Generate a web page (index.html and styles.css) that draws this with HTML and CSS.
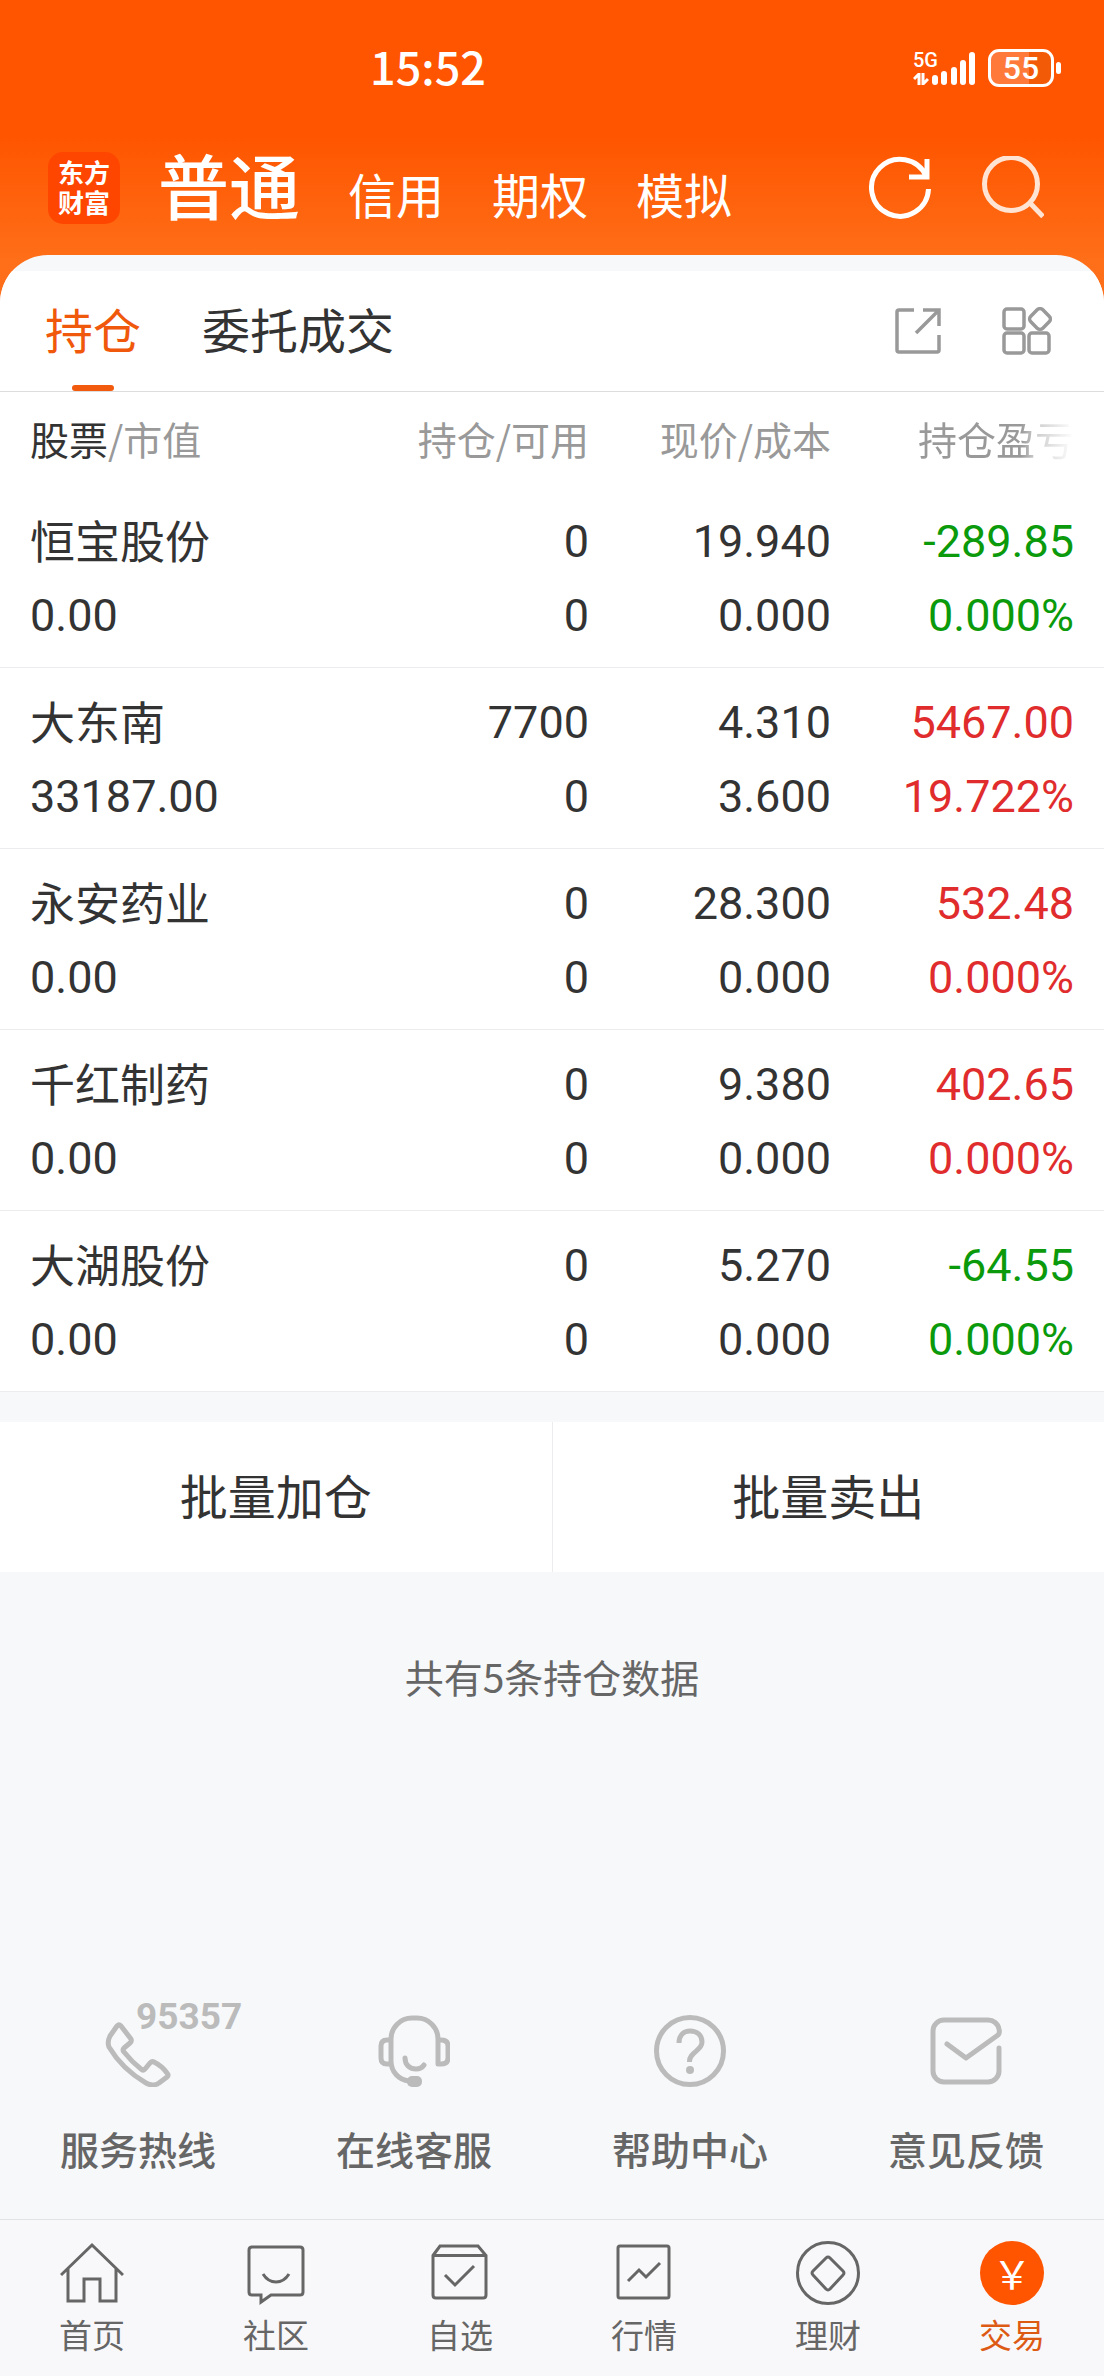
FILE: index.html
```html
<!DOCTYPE html>
<html lang="zh-CN">
<head>
<meta charset="utf-8">
<meta name="viewport" content="width=device-width">
<title>东方财富 - 交易</title>
<link rel="stylesheet" href="styles.css">
</head>
<body>
<header class="header">
  <div class="status">
    <time class="status-time">15:52</time>
    <div class="status-right">
      <div class="network">
        <span class="network-type">5G</span>
        <svg class="network-arrows" viewBox="0 0 16 12" aria-hidden="true"><path d="M6 12V1L1 6M10 0v11l5-5" fill="none" stroke="#fff" stroke-width="3"/></svg>
      </div>
      <svg class="signal" viewBox="0 0 44 34" aria-hidden="true">
        <g fill="#fff"><rect x="0" y="24" width="6" height="10" rx="3"/><rect x="9" y="20" width="6" height="14" rx="3"/><rect x="19" y="16" width="6" height="18" rx="3"/><rect x="28" y="9" width="6" height="25" rx="3"/><rect x="37" y="1" width="6" height="33" rx="3"/></g>
      </svg>
      <div class="battery">55</div>
    </div>
  </div>
  <div class="appbar">
    <a class="logo" href="#"><span>东方</span><span>财富</span></a>
    <nav class="accounts">
      <a class="account account-on" href="#">普通</a>
      <a class="account" href="#">信用</a>
      <a class="account" href="#">期权</a>
      <a class="account" href="#">模拟</a>
    </nav>
    <button class="icon-btn" type="button" aria-label="刷新">
      <svg width="64" height="64" viewBox="0 0 64 64" fill="none" stroke="#fff" stroke-width="5"><path d="M60.5 33A28.5 28.500 0 1 1 58 20M59 3v18M41 21h20.500"/></svg>
    </button>
    <button class="icon-btn" type="button" aria-label="搜索">
      <svg width="64" height="64" viewBox="0 0 64 64" fill="none" stroke="#ffe4d3" stroke-width="5"><circle cx="31" cy="28" r="26.500"/><path d="M50 47l13 13.500"/></svg>
    </button>
  </div>
</header>

<main class="sheet">
  <div class="tabs">
    <a class="tab tab-on" href="#">持仓</a>
    <a class="tab" href="#">委托成交</a>
    <div class="tools">
      <button class="icon-btn" type="button" aria-label="分享">
        <svg width="48" height="48" viewBox="0 0 48 48" fill="none" stroke="#999" stroke-width="3.500"><path d="M20 3H5Q3 3 3 5v38q0 2 2 2h38q2 0 2-2V28M29 3h16v16M22 26L45 3"/></svg>
      </button>
      <button class="icon-btn" type="button" aria-label="更多功能">
        <svg width="50" height="48" viewBox="0 0 50 48" fill="none" stroke="#999" stroke-width="3.500"><rect x="2" y="2" width="20" height="20" rx="3"/><rect x="2" y="26" width="20" height="20" rx="3"/><rect x="27" y="26" width="20" height="20" rx="3"/><rect x="29.500" y="3.500" width="17" height="17" rx="4" transform="rotate(45 38 12)"/></svg>
      </button>
    </div>
  </div>

  <table class="holdings">
    <colgroup><col><col class="col-num"><col class="col-num"><col class="col-last"></colgroup>
    <thead>
      <tr><th><b>股票</b>/市值</th><th>持仓/可用</th><th>现价/成本</th><th class="fade">持仓盈亏</th></tr>
    </thead>
    <tbody>
      <tr><td><span class="name">恒宝股份</span><span>0.00</span></td><td><span>0</span><span>0</span></td><td><span>19.940</span><span>0.000</span></td><td class="down"><span>-289.85</span><span>0.000%</span></td></tr>
      <tr><td><span class="name">大东南</span><span>33187.00</span></td><td><span>7700</span><span>0</span></td><td><span>4.310</span><span>3.600</span></td><td class="up"><span>5467.00</span><span>19.722%</span></td></tr>
      <tr><td><span class="name">永安药业</span><span>0.00</span></td><td><span>0</span><span>0</span></td><td><span>28.300</span><span>0.000</span></td><td class="up"><span>532.48</span><span>0.000%</span></td></tr>
      <tr><td><span class="name">千红制药</span><span>0.00</span></td><td><span>0</span><span>0</span></td><td><span>9.380</span><span>0.000</span></td><td class="up"><span>402.65</span><span>0.000%</span></td></tr>
      <tr><td><span class="name">大湖股份</span><span>0.00</span></td><td><span>0</span><span>0</span></td><td><span>5.270</span><span>0.000</span></td><td class="down"><span>-64.55</span><span>0.000%</span></td></tr>
    </tbody>
  </table>

  <div class="batch">
    <button class="batch-btn" type="button">批量加仓</button>
    <button class="batch-btn" type="button">批量卖出</button>
  </div>
  <p class="total">共有5条持仓数据</p>

  <div class="services">
    <a class="service" href="#">
      <span class="service-icon">
        <svg width="72" height="72" viewBox="0 0 72 72"><path d="M15 11Q17 9 19 11L29 24Q30 26 28 28L22 33Q20 35 22 37Q30 47 39 54Q41 56 43 54L48 48Q50 46 52 47Q60 51 65 58Q67 60 65 62L57 68Q51 72 44 68Q20 54 7 32Q5 27 8 21Z"/></svg>
        <span class="hotline">95357</span>
      </span>
      服务热线
    </a>
    <a class="service" href="#">
      <span class="service-icon">
        <svg width="72" height="72" viewBox="0 0 72 72"><path d="M60 49V24A21 21 0 0 0 39 3H34A21 21 0 0 0 13 24V46C13 57 21 65 31 66M13 25H9Q3 25 3 31V43Q3 49 9 49H13M60 25H63Q70 25 70 31V43Q70 49 63 49H60ZM27 43C27 50 32 54 38 54C41 54 44 53 46 50"/><rect class="solid" x="29" y="61" width="15" height="11" rx="5"/></svg>
      </span>
      在线客服
    </a>
    <a class="service" href="#">
      <span class="service-icon">
        <svg width="72" height="72" viewBox="0 0 72 72"><circle cx="36" cy="36" r="33.500"/><path stroke-linecap="butt" d="M25 28C25 20 30 16 36 16C43 16 48 20 48 27C48 36 35 37 35.500 47"/><circle class="solid" cx="36" cy="55" r="4"/></svg>
      </span>
      帮助中心
    </a>
    <a class="service" href="#">
      <span class="service-icon">
        <svg width="72" height="72" viewBox="0 0 72 72"><path d="M17 29L36 43L68 20Q70 18 69 14A11 11 0 0 0 58 5H14A11 11 0 0 0 3 16V56A11 11 0 0 0 14 67H58A11 11 0 0 0 69 56V33"/></svg>
      </span>
      意见反馈
    </a>
  </div>
</main>

<nav class="navbar">
  <a class="nav" href="#"><svg width="64" height="64" viewBox="0 0 64 64"><path d="M1 34L32 4L63 34M8 28V60H24V38H40V60H56V28"/></svg>首页</a>
  <a class="nav" href="#"><svg width="64" height="64" viewBox="0 0 64 64"><path d="M7 6H56Q59 6 59 9V51Q59 54 56 54H27L17 61V54H8Q5 54 5 51V9Q5 6 8 6M19 33Q24 41 32 41T45 33"/></svg>社区</a>
  <a class="nav" href="#"><svg width="64" height="64" viewBox="0 0 64 64"><path d="M5 14.500L12 5H50L58 14.500V54Q58 57 55 57H8Q5 57 5 54ZH58M17 34L27 44L46 25"/></svg>自选</a>
  <a class="nav" href="#"><svg width="64" height="64" viewBox="0 0 64 64"><rect x="6" y="5" width="51" height="52" rx="2"/><path d="M16 40L27 29L34 36L48 22"/></svg>行情</a>
  <a class="nav" href="#"><svg width="64" height="64" viewBox="0 0 64 64"><circle cx="32" cy="32" r="30.500"/><path d="M30 17Q32 15 34 17L47 30Q49 32 47 34L34 48Q32 50 30 48L17 34Q15 32 17 30Z"/></svg>理财</a>
  <a class="nav nav-on" href="#"><span class="coin">￥</span>交易</a>
</nav>
</body>
</html>
```
FILE: styles.css
```css
* { box-sizing: border-box; }

body {
  margin: 0;
  min-height: 100vh;
  display: flex;
  flex-direction: column;
  font-family: "Noto Sans CJK SC", sans-serif;
  color: #333;
  background: #f7f8fa linear-gradient(#ff5500 136px, #ff6e18 260px) no-repeat 0 0 / 100% 320px;
}

a { color: inherit; text-decoration: none; }

button {
  margin: 0;
  padding: 0;
  border: 0;
  background: none;
  font: inherit;
  color: inherit;
}

svg { display: block; }

.icon-btn { display: block; }

/* status bar */
.status {
  display: flex;
  align-items: center;
  justify-content: space-between;
  height: 136px;
  padding: 0 50px 0 370px;
  color: #fff;
  font-family: Roboto, sans-serif;
}

.status-time {
  font-family: "Noto Sans CJK SC", sans-serif;
  font-size: 45px;
  line-height: 64px;
  padding-bottom: 4px;
  font-weight: 500;
}

.status-right { display: flex; align-items: center; }

.network {
  display: flex;
  flex-direction: column;
  width: 19px;
  height: 34px;
  justify-content: space-between;
}

.network-type {
  font-size: 20px;
  line-height: 18px;
  font-weight: 500;
}

.network-arrows { width: 16px; height: 12px; }

.signal { width: 44px; height: 34px; margin-right: 12px; }

.battery {
  position: relative;
  width: 66px;
  height: 38px;
  border: 3px solid #fff;
  border-radius: 11px;
  background: linear-gradient(90deg, #ff7a3a 38px, #f35a08 38px);
  font-size: 32px;
  line-height: 32px;
  font-weight: 500;
  text-align: center;
}

.battery::after {
  content: "";
  position: absolute;
  right: -10px;
  top: 10px;
  width: 5px;
  height: 12px;
  border-radius: 3px;
  background: #fff;
}

/* account switcher */
.appbar {
  display: flex;
  align-items: center;
  height: 119px;
  padding: 0 60px 16px 48px;
  gap: 48px;
  color: #fff;
}

.logo {
  display: flex;
  flex-direction: column;
  width: 72px;
  height: 72px;
  padding: 5px 0;
  border-radius: 15px;
  background: #ff4600;
  font-size: 26px;
  line-height: 30px;
  font-weight: 700;
  text-align: center;
}

.accounts {
  flex: 1;
  display: flex;
  align-items: baseline;
  gap: 48px;
  margin-left: -10px;
  line-height: 72px;
}

.account { font-size: 48px; }

.account-on { font-size: 71px; font-weight: 500; }

/* content sheet */
.sheet {
  flex: 1;
  display: flex;
  flex-direction: column;
  padding-top: 16px;
  border-radius: 48px 48px 0 0;
  background: #f7f8fa;
  overflow: hidden;
}

.tabs {
  display: flex;
  gap: 61px;
  height: 121px;
  padding: 0 52px 0 45px;
  border-bottom: 1px solid #ddd;
  background: #fff;
  font-size: 48px;
  line-height: 114px;
}

.tab-on { position: relative; color: #f0590c; }

.tab-on::after {
  content: "";
  position: absolute;
  left: 27px;
  bottom: 0;
  width: 42px;
  height: 6px;
  border-radius: 3px;
  background: #f25b0e;
}

.tools {
  display: flex;
  align-items: center;
  gap: 60px;
  margin-left: auto;
}

/* holdings */
.holdings {
  width: 100%;
  table-layout: fixed;
  border-collapse: collapse;
  background: #fff;
}

.col-num { width: 242px; }
.col-last { width: 273px; }

.holdings th {
  height: 95px;
  padding: 0 0 4px;
  font-size: 39px;
  line-height: 56px;
  font-weight: 400;
  color: #999;
  text-align: right;
  white-space: nowrap;
}

.holdings b { font-weight: 400; color: #333; }

.holdings td {
  padding: 18px 0 14px;
  border-bottom: 1px solid #ececee;
  font-family: Roboto, sans-serif;
  font-size: 45px;
  line-height: 74px;
  text-align: right;
}

.holdings td span { display: block; height: 74px; }

.holdings .name {
  font-family: "Noto Sans CJK SC", sans-serif;
  line-height: 70px;
}

.holdings th:first-child,
.holdings td:first-child { padding-left: 30px; text-align: left; }

.holdings th:last-child,
.holdings td:last-child { padding-right: 30px; }

.holdings .fade {
  color: transparent;
  background: linear-gradient(90deg, #999 190px, #ccc 204px, #fff 243px);
  background-clip: text;
}

.up { color: #e02c2c; }
.down { color: #0b9a0b; }

/* batch actions */
.batch {
  display: flex;
  margin-top: 30px;
  background: #fff;
}

.batch-btn {
  flex: 1;
  height: 150px;
  padding-bottom: 6px;
  font-size: 48px;
}

.batch-btn + .batch-btn { border-left: 1px solid #ececee; }

.total {
  margin: 76px 0;
  font-size: 39px;
  line-height: 56px;
  color: #666;
  text-align: center;
}

/* service shortcuts */
.services {
  display: flex;
  margin-top: auto;
  padding-bottom: 47px;
}

.service {
  flex: 1;
  display: flex;
  flex-direction: column;
  align-items: center;
  gap: 37px;
  font-size: 39px;
  line-height: 48px;
  font-weight: 500;
  color: #666;
}

.service-icon { position: relative; }

.service-icon svg {
  fill: none;
  stroke: #bbb;
  stroke-width: 5px;
  stroke-linecap: round;
  stroke-linejoin: round;
}

.service-icon .solid { fill: #bbb; stroke: none; }

.hotline {
  position: absolute;
  left: 34px;
  top: -12px;
  font-family: Roboto, sans-serif;
  font-size: 37px;
  line-height: 28px;
  font-weight: 700;
  color: #bbb;
}

/* bottom navigation */
.navbar {
  display: flex;
  height: 157px;
  padding-top: 21px;
  border-top: 1px solid #e2e3e5;
  background: #f8f8fa;
}

.nav {
  flex: 1;
  display: flex;
  flex-direction: column;
  align-items: center;
  gap: 5px;
  font-size: 33px;
  line-height: 48px;
  color: #666;
}

.nav svg {
  fill: none;
  stroke: #666;
  stroke-width: 3px;
}

.nav-on { color: #dd5a14; }

.coin {
  width: 64px;
  height: 64px;
  border-radius: 50%;
  background: #ff5500;
  font-size: 39px;
  line-height: 62px;
  text-align: center;
  color: #fff;
}
```
